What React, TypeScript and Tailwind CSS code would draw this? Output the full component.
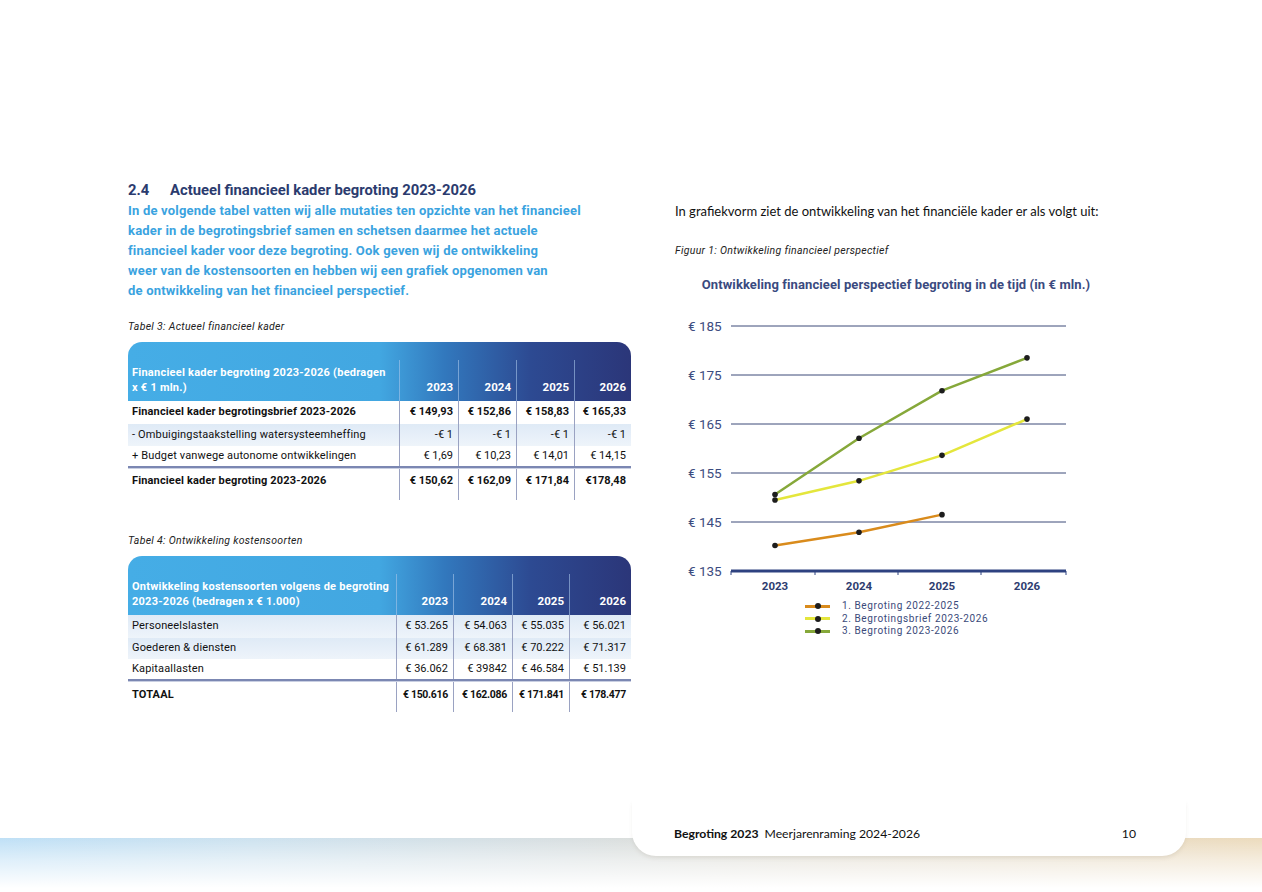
import React from 'react';

type Row = { label: string; values: string[]; bold?: boolean; band?: boolean; h: string };

const series = [
  { name: '1. Begroting 2022-2025', color: '#d98b1c', values: [140.2, 142.9, 146.5] },
  { name: '2. Begrotingsbrief 2023-2026', color: '#e4e63c', values: [149.5, 153.4, 158.6, 166.0] },
  { name: '3. Begroting 2023-2026', color: '#86a83a', values: [150.6, 162.1, 171.8, 178.5] },
];
const xs = [775, 859, 942, 1027];
const yOf = (v: number) => 571 - (v - 135) * 4.9;

function FinTable({
  widths,
  title,
  rows,
  total,
  totalPad,
  totalValueClass = '',
}: {
  widths: string[];
  title: string[];
  rows: Row[];
  total: { label: string; values: string[] };
  totalPad: string;
  totalValueClass?: string;
}) {
  const years = ['2023', '2024', '2025', '2026'];
  return (
    <div className="w-[503px] font-['Roboto',sans-serif] text-[11px] text-[#111]">
      {/* header */}
      <div className="flex h-[59px] rounded-t-[14px] bg-[linear-gradient(90deg,#45ade6_0%,#42a7e1_50%,#3278bd_63%,#2d4a92_80%,#2b3679_100%)] text-white font-bold">
        <div className={`${widths[0]} flex flex-col justify-end pl-[4px] pb-[6px] text-[11px] tracking-[0.25px] leading-[15px]`}>
          {title.map((t) => (
            <span key={t} className="whitespace-nowrap">{t}</span>
          ))}
        </div>
        {years.map((y, i) => (
          <div key={y} className={`${widths[i + 1]} mt-[18px] border-l border-[#a9c6ea]/60 flex items-end justify-end pr-[5px] pb-[6px] text-[11.5px] leading-[15px]`}>
            {y}
          </div>
        ))}
      </div>
      {/* body */}
      {rows.map((r) => (
        <div
          key={r.label}
          className={`flex ${r.h} ${r.bold ? 'font-bold' : ''} ${r.band ? 'bg-[linear-gradient(180deg,#dfeaf6_0%,#e8f0f9_60%,#eef4fa_100%)]' : ''}`}
        >
          <div className={`${widths[0]} flex items-center pl-[4px] whitespace-nowrap tracking-[0.15px]`}>{r.label}</div>
          {r.values.map((v, i) => (
            <div key={i} className={`${widths[i + 1]} border-l border-[#9aa2c2] flex items-center justify-end pr-[5px] whitespace-nowrap`}>
              {v}
            </div>
          ))}
        </div>
      ))}
      <div className="h-[3px] border-t-2 border-b border-t-[#7b87b2] border-b-[#c9cfe2] flex">
        <div className={widths[0]} />
        {widths.slice(1).map((w, i) => (
          <div key={i} className={`${w} border-l border-[#9aa2c2]`} />
        ))}
      </div>
      <div className="flex font-bold">
        <div className={`${widths[0]} ${totalPad} pl-[4px] leading-[14px] tracking-[0.15px]`}>{total.label}</div>
        {total.values.map((v, i) => (
          <div key={i} className={`${widths[i + 1]} ${totalPad} ${totalValueClass} border-l border-[#9aa2c2] text-right pr-[5px] leading-[14px] whitespace-nowrap`}>
            {v}
          </div>
        ))}
      </div>
    </div>
  );
}

function Chart() {
  const grid = [185, 175, 165, 155, 145];
  return (
    <svg width="420" height="290" viewBox="675 310 420 290" className="block">
      {grid.map((g) => (
        <g key={g}>
          <line x1="731" x2="1066" y1={yOf(g)} y2={yOf(g)} stroke="#3d4a78" strokeWidth="1" />
          <text x="688" y={yOf(g) + 5} fontSize="13.5" fill="#3c4c80" fontFamily="Roboto, sans-serif">
            € {g}
          </text>
        </g>
      ))}
      <text x="688" y={571 + 5} fontSize="13.5" fill="#3c4c80" fontFamily="Roboto, sans-serif">
        € 135
      </text>
      <line x1="731" x2="1066" y1="571" y2="571" stroke="#2e4280" strokeWidth="3" />
      {[731, 815, 898, 981, 1066].map((x) => (
        <line key={x} x1={x} x2={x} y1="571" y2="575" stroke="#2e4280" strokeWidth="1" />
      ))}
      {xs.map((x, i) => (
        <text key={x} x={x} y="589.5" textAnchor="middle" fontSize="11.5" fontWeight="700" fill="#2e3d70" fontFamily="Roboto, sans-serif">
          {2023 + i}
        </text>
      ))}
      {series.map((s) => (
        <g key={s.name}>
          <polyline
            points={s.values.map((v, i) => `${xs[i]},${yOf(v)}`).join(' ')}
            fill="none"
            stroke={s.color}
            strokeWidth="2.5"
            strokeLinejoin="round"
          />
          {s.values.map((v, i) => (
            <circle key={i} cx={xs[i]} cy={yOf(v)} r="2.8" fill="#1d1d1d" />
          ))}
        </g>
      ))}
    </svg>
  );
}

export default function App() {
  return (
    <div className="relative h-[892px] w-full overflow-hidden bg-white flex flex-col">
      <div className="flex pt-[181px] pl-[128px]">
        {/* left column */}
        <div className="w-[503px] flex flex-col">
          <h2 className="flex text-[14.8px] leading-[18px] font-bold text-[#2b3b6e] font-['Roboto',sans-serif]">
            <span className="w-[42px]">2.4</span>
            <span>Actueel financieel kader begroting 2023-2026</span>
          </h2>
          <p className="mt-[2px] text-[13px] leading-[20px] tracking-[0.2px] font-bold text-[#3aa3df] font-['Roboto',sans-serif] whitespace-nowrap">
            In de volgende tabel vatten wij alle mutaties ten opzichte van het financieel
            <br />
            kader in de begrotingsbrief samen en schetsen daarmee het actuele
            <br />
            financieel kader voor deze begroting. Ook geven wij de ontwikkeling
            <br />
            weer van de kostensoorten en hebben wij een grafiek opgenomen van
            <br />
            de ontwikkeling van het financieel perspectief.
          </p>

          <div className="mt-[20px] text-[10.5px] leading-[12px] tracking-[0.3px] italic text-[#222] font-['Roboto',sans-serif]">Tabel 3: Actueel financieel kader</div>
          <div className="mt-[9px]">
            <FinTable
              widths={['w-[271px]', 'w-[59px]', 'w-[58px]', 'w-[58px]', 'w-[57px]']}
              title={['Financieel kader begroting 2023-2026 (bedragen', 'x € 1 mln.)']}
              rows={[
                { label: 'Financieel kader begrotingsbrief 2023-2026', values: ['€ 149,93', '€ 152,86', '€ 158,83', '€ 165,33'], bold: true, h: 'h-[23px]' },
                { label: '- Ombuigingstaakstelling watersysteemheffing', values: ['-€ 1', '-€ 1', '-€ 1', '-€ 1'], band: true, h: 'h-[22px]' },
                { label: '+ Budget vanwege autonome ontwikkelingen', values: ['€ 1,69', '€ 10,23', '€ 14,01', '€ 14,15'], h: 'h-[20px]' },
              ]}
              total={{ label: 'Financieel kader begroting 2023-2026', values: ['€ 150,62', '€ 162,09', '€ 171,84', '€178,48'] }}
              totalPad="pt-[5px] pb-[12px]"
            />
          </div>

          <div className="mt-[35px] text-[10.5px] leading-[12px] tracking-[0.3px] italic text-[#222] font-['Roboto',sans-serif]">Tabel 4: Ontwikkeling kostensoorten</div>
          <div className="mt-[9px]">
            <FinTable
              widths={['w-[268px]', 'w-[57px]', 'w-[59px]', 'w-[57px]', 'w-[62px]']}
              title={['Ontwikkeling kostensoorten volgens de begroting', '2023-2026 (bedragen x € 1.000)']}
              rows={[
                { label: 'Personeelslasten', values: ['€ 53.265', '€ 54.063', '€ 55.035', '€ 56.021'], band: true, h: 'h-[23px]' },
                { label: 'Goederen & diensten', values: ['€ 61.289', '€ 68.381', '€ 70.222', '€ 71.317'], band: true, h: 'h-[21px]' },
                { label: 'Kapitaallasten', values: ['€ 36.062', '€ 39842', '€ 46.584', '€ 51.139'], h: 'h-[20px]' },
              ]}
              total={{ label: 'TOTAAL', values: ['€ 150.616', '€ 162.086', '€ 171.841', '€ 178.477'] }}
              totalPad="pt-[6px] pb-[10px]"
              totalValueClass="text-[10.5px] tracking-[-0.3px]"
            />
          </div>
        </div>

        {/* right column */}
        <div className="ml-[44px] w-[430px] flex flex-col pt-[20px]">
          <p className="text-[13px] leading-[20px] text-[#111] font-['Lato',sans-serif] whitespace-nowrap">
            In grafiekvorm ziet de ontwikkeling van het financiële kader er als volgt uit:
          </p>
          <div className="mt-[24px] text-[10.5px] leading-[12px] tracking-[0.3px] italic text-[#222] font-['Roboto',sans-serif]">Figuur 1: Ontwikkeling financieel perspectief</div>
          <div className="mt-[20px] text-center text-[13px] leading-[16px] tracking-[0.1px] font-bold text-[#3a4a80] font-['Roboto',sans-serif] pl-[12px] whitespace-nowrap">
            Ontwikkeling financieel perspectief begroting in de tijd (in € mln.)
          </div>
          <div className="mt-[17px]">
            <Chart />
          </div>
          <div className="ml-[130px] flex flex-col font-['Roboto',sans-serif] text-[10px] leading-[12.5px] tracking-[0.6px] text-[#3b4a7a]">
            {series.map((s) => (
              <div key={s.name} className="flex items-center">
                <span className="w-[25px] h-[3px] flex items-center justify-center" style={{ backgroundColor: s.color }}>
                  <span className="w-[6px] h-[6px] rounded-full bg-[#1d1d1d]" />
                </span>
                <span className="ml-[12px] whitespace-nowrap">{s.name}</span>
              </div>
            ))}
          </div>
        </div>
      </div>

      {/* footer */}
      <div className="relative mt-auto h-[92px]">
        <div className="absolute left-0 right-0 top-[38px] h-[50px] bg-[linear-gradient(90deg,#bfe0f6_0%,#cde2ef_20%,#d8dfe1_45%,#e2ddd2_65%,#ecdbbd_100%)]">
          <div className="h-full w-full bg-[linear-gradient(180deg,rgba(255,255,255,0)_0%,rgba(255,255,255,0.5)_45%,#ffffff_100%)]" />
        </div>
        <div className="absolute left-[632px] w-[554px] top-0 h-[56px] bg-white rounded-b-[24px] shadow-[0_3px_4px_-1px_rgba(120,110,90,0.15)] flex items-center pt-[12px] pl-[42px] pr-[50px] font-['Lato',sans-serif] text-[12.2px] text-[#111]">
          <span className="font-bold">Begroting 2023</span>
          <span className="ml-[6px]">Meerjarenraming 2024-2026</span>
          <span className="ml-auto">10</span>
        </div>
      </div>
    </div>
  );
}
